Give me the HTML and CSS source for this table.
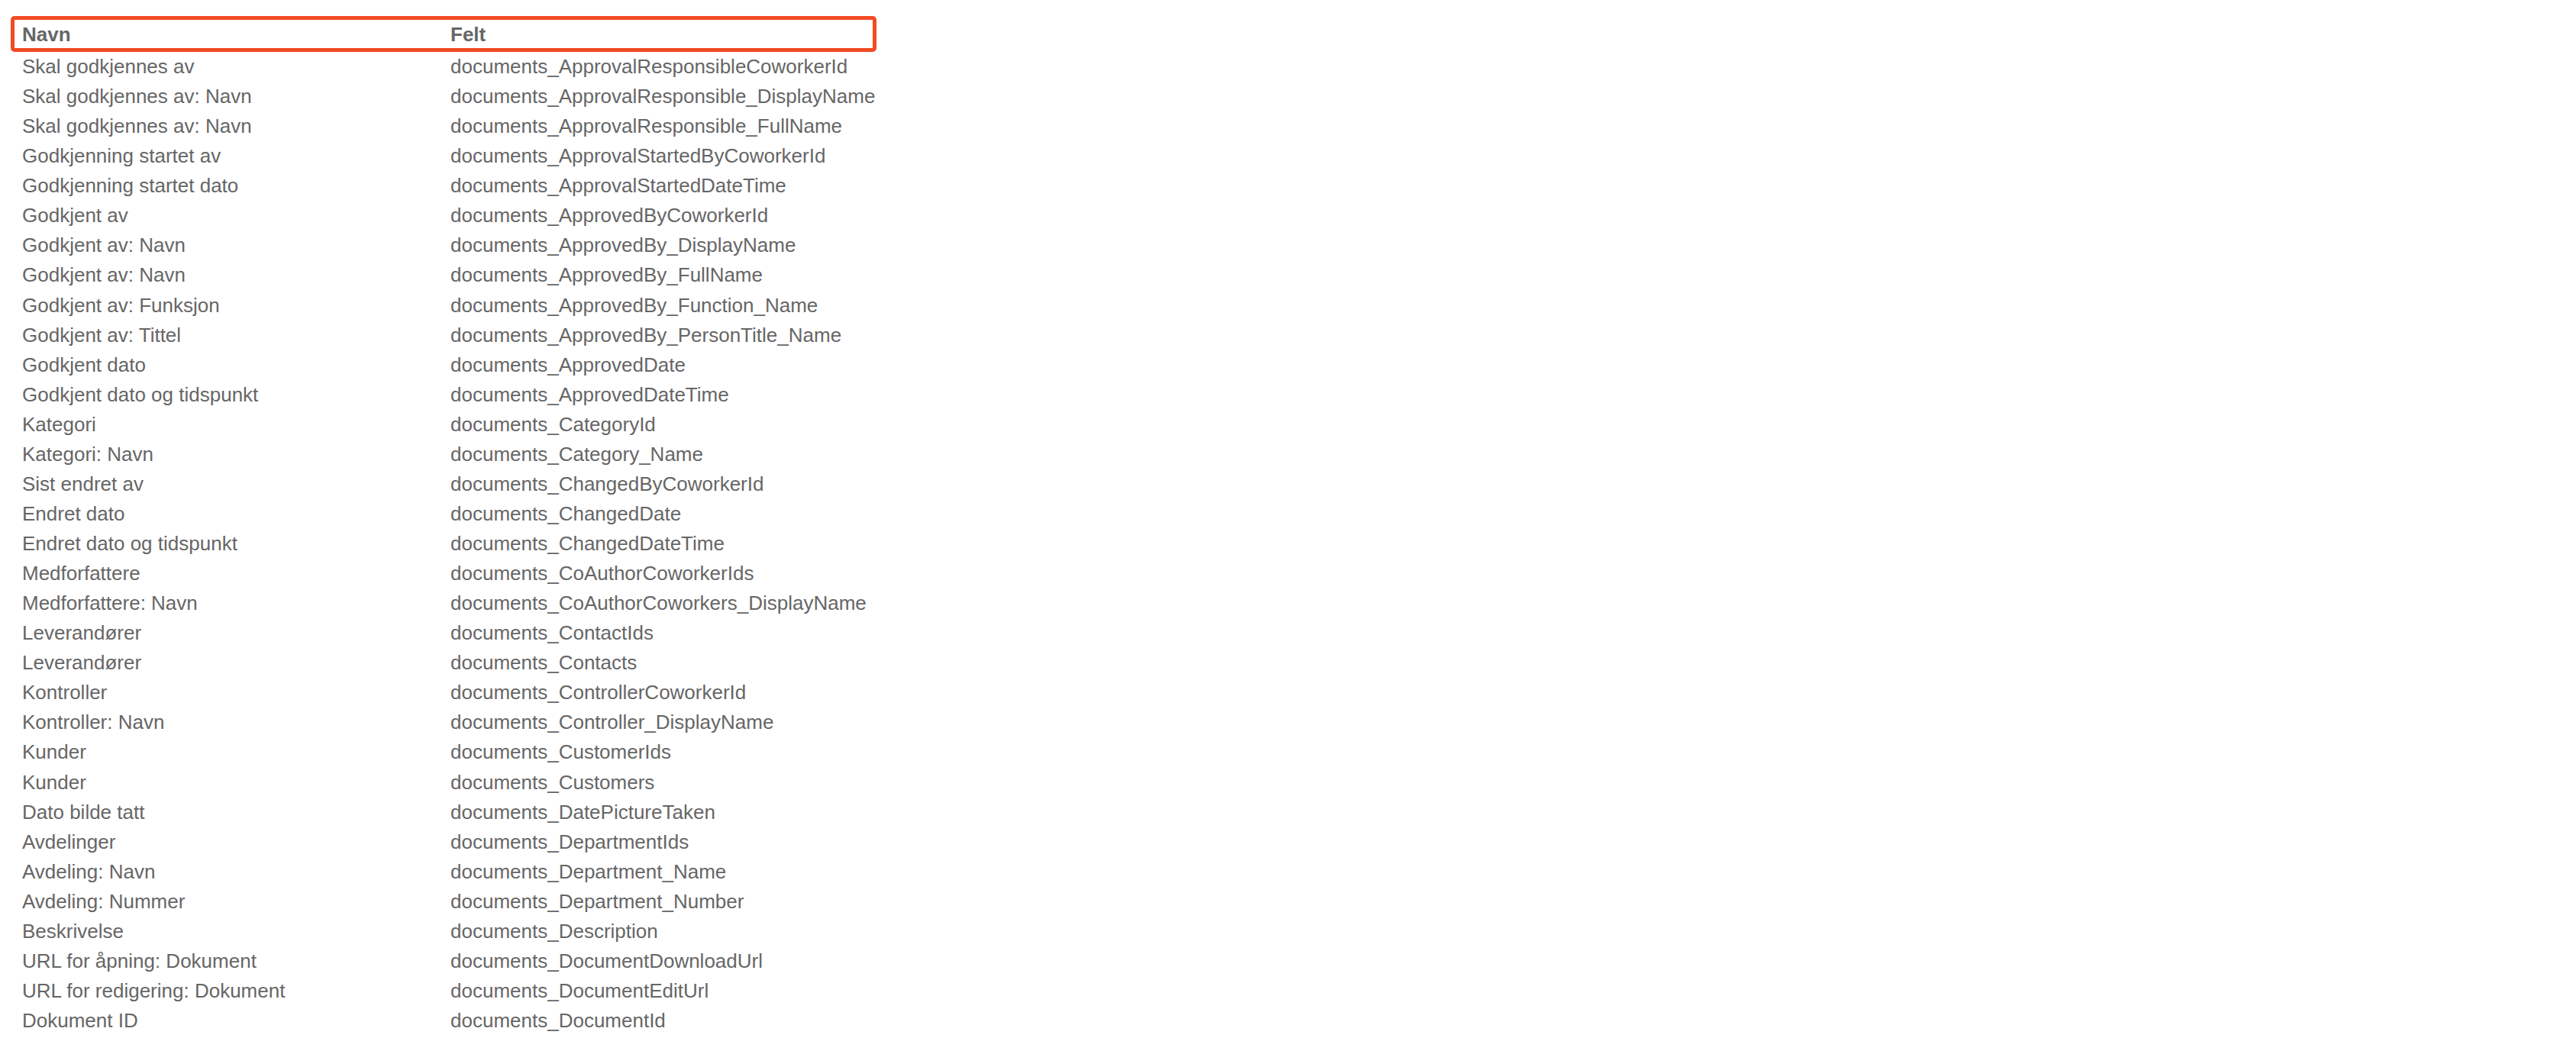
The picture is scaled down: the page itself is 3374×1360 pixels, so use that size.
FILE: index.html
```html
<!DOCTYPE html>
<html lang="en">
<head>
    <meta charset="UTF-8">
    <title>Felter</title>
    <link rel="stylesheet" href="styles.css">
</head>
<body>
    <div class="field-list">
        <div class="row header">
            <span>Navn</span>
            <span>Felt</span>
        </div>
        <div class="row"><span>Skal godkjennes av</span><span>documents_ApprovalResponsibleCoworkerId</span></div>
        <div class="row"><span>Skal godkjennes av: Navn</span><span>documents_ApprovalResponsible_DisplayName</span></div>
        <div class="row"><span>Skal godkjennes av: Navn</span><span>documents_ApprovalResponsible_FullName</span></div>
        <div class="row"><span>Godkjenning startet av</span><span>documents_ApprovalStartedByCoworkerId</span></div>
        <div class="row"><span>Godkjenning startet dato</span><span>documents_ApprovalStartedDateTime</span></div>
        <div class="row"><span>Godkjent av</span><span>documents_ApprovedByCoworkerId</span></div>
        <div class="row"><span>Godkjent av: Navn</span><span>documents_ApprovedBy_DisplayName</span></div>
        <div class="row"><span>Godkjent av: Navn</span><span>documents_ApprovedBy_FullName</span></div>
        <div class="row"><span>Godkjent av: Funksjon</span><span>documents_ApprovedBy_Function_Name</span></div>
        <div class="row"><span>Godkjent av: Tittel</span><span>documents_ApprovedBy_PersonTitle_Name</span></div>
        <div class="row"><span>Godkjent dato</span><span>documents_ApprovedDate</span></div>
        <div class="row"><span>Godkjent dato og tidspunkt</span><span>documents_ApprovedDateTime</span></div>
        <div class="row"><span>Kategori</span><span>documents_CategoryId</span></div>
        <div class="row"><span>Kategori: Navn</span><span>documents_Category_Name</span></div>
        <div class="row"><span>Sist endret av</span><span>documents_ChangedByCoworkerId</span></div>
        <div class="row"><span>Endret dato</span><span>documents_ChangedDate</span></div>
        <div class="row"><span>Endret dato og tidspunkt</span><span>documents_ChangedDateTime</span></div>
        <div class="row"><span>Medforfattere</span><span>documents_CoAuthorCoworkerIds</span></div>
        <div class="row"><span>Medforfattere: Navn</span><span>documents_CoAuthorCoworkers_DisplayName</span></div>
        <div class="row"><span>Leverandører</span><span>documents_ContactIds</span></div>
        <div class="row"><span>Leverandører</span><span>documents_Contacts</span></div>
        <div class="row"><span>Kontroller</span><span>documents_ControllerCoworkerId</span></div>
        <div class="row"><span>Kontroller: Navn</span><span>documents_Controller_DisplayName</span></div>
        <div class="row"><span>Kunder</span><span>documents_CustomerIds</span></div>
        <div class="row"><span>Kunder</span><span>documents_Customers</span></div>
        <div class="row"><span>Dato bilde tatt</span><span>documents_DatePictureTaken</span></div>
        <div class="row"><span>Avdelinger</span><span>documents_DepartmentIds</span></div>
        <div class="row"><span>Avdeling: Navn</span><span>documents_Department_Name</span></div>
        <div class="row"><span>Avdeling: Nummer</span><span>documents_Department_Number</span></div>
        <div class="row"><span>Beskrivelse</span><span>documents_Description</span></div>
        <div class="row"><span>URL for åpning: Dokument</span><span>documents_DocumentDownloadUrl</span></div>
        <div class="row"><span>URL for redigering: Dokument</span><span>documents_DocumentEditUrl</span></div>
        <div class="row"><span>Dokument ID</span><span>documents_DocumentId</span></div>
    </div>
</body>
</html>
```

FILE: styles.css
```css
body {
    margin: 0;
    padding: 21px 0 0 14px;
    background-color: #fff;
    font-family: 'Liberation Sans', Arial, sans-serif;
    font-size: 26px;
    color: #666;
    overflow: hidden;
}

.field-list {
    display: flex;
    flex-direction: column;
    width: 1134px;
}

.row {
    display: grid;
    grid-template-columns: 561px 1fr;
    padding-left: 15px;
    line-height: 39.06px;
    white-space: nowrap;
}

/* highlighted header row */
.header {
    height: 37px;
    padding-left: 10px;
    border: 5px solid #f24a23;
    border-radius: 5px;
    font-weight: bold;
}
```
